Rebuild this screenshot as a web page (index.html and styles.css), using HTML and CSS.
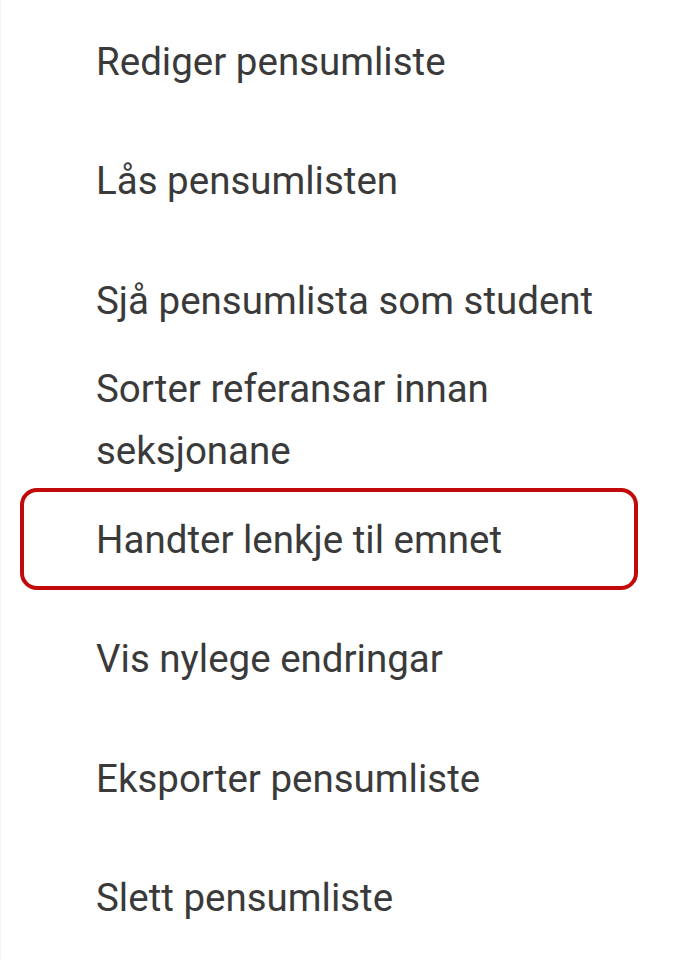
FILE: index.html
```html
<!DOCTYPE html>
<html lang="nn">
<head>
<meta charset="utf-8">
<title>Meny</title>
<link rel="stylesheet" href="styles.css">
</head>
<body>
<ul class="menu">
  <li class="menu-item">Rediger pensumliste</li>
  <li class="menu-item">Lås pensumlisten</li>
  <li class="menu-item">Sjå pensumlista som student</li>
  <li class="menu-item">Sorter referansar innan seksjonane</li>
  <li class="menu-item is-marked">Handter lenkje til emnet</li>
  <li class="menu-item">Vis nylege endringar</li>
  <li class="menu-item">Eksporter pensumliste</li>
  <li class="menu-item">Slett pensumliste</li>
</ul>
</body>
</html>
```
FILE: styles.css
```css
html, body {
  margin: 0;
  padding: 0;
  background: #ffffff;
}

body {
  font-family: Roboto, "Liberation Sans", sans-serif;
  color: #3a3a3a;
  border-left: 1px solid #f4f4f4;
  min-height: 960px;
  box-sizing: border-box;
}

.menu {
  list-style: none;
  margin: 0;
  padding: 2px 0 0 0;
  width: 700px;
  display: flex;
  flex-direction: column;
}

.menu-item {
  position: relative;
  height: 119.5px;
  display: flex;
  align-items: center;
  padding: 0 60px 0 95px;
  box-sizing: border-box;
  font-size: 38.5px;
  line-height: 62px;
  font-weight: 400;
}

.is-marked::after {
  content: "";
  position: absolute;
  left: 19px;
  top: 8px;
  width: 618px;
  height: 102px;
  box-sizing: border-box;
  border: 4.5px solid #c20a0a;
  border-radius: 17px;
}
```
